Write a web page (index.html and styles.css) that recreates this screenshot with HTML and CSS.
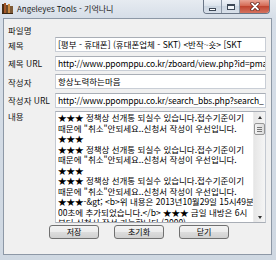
FILE: index.html
```html
<!DOCTYPE html>
<html lang="ko">
<head>
    <meta charset="UTF-8">
    <title>Angeleyes Tools - 기억나니</title>
    <link rel="stylesheet" href="styles.css">
</head>
<body>

<div class="window">
    <div class="titlebar">
        <svg class="app-icon" width="11" height="11" viewBox="0 0 11 11">
            <rect x="0" y="1" width="2" height="10" fill="#4a2e16"/>
            <rect x="2" y="0" width="2" height="11" fill="#a4572a"/>
            <rect x="4" y="2" width="2" height="9" fill="#6b4a2a"/>
            <rect x="6" y="1" width="2" height="10" fill="#c98a44"/>
            <rect x="8" y="3" width="3" height="8" fill="#7d5a36"/>
            <rect x="0" y="10" width="11" height="1" fill="#3a2410"/>
        </svg>
        <span class="title">Angeleyes Tools - 기억나니</span>
        <div class="caption-buttons">
            <div class="cap-btn cap-min"><span class="min-glyph"></span></div>
            <div class="cap-btn cap-max"><span class="max-glyph"></span></div>
            <div class="cap-btn cap-close">
                <svg width="10" height="9" viewBox="0 0 10 9">
                    <path d="M2 1.5 L8 7.5 M8 1.5 L2 7.5" stroke="#5a1a10" stroke-width="3.2" stroke-linecap="round"/>
                    <path d="M2 1.5 L8 7.5 M8 1.5 L2 7.5" stroke="#ffffff" stroke-width="1.8" stroke-linecap="round"/>
                </svg>
            </div>
        </div>
    </div>

    <div class="client">
        <div class="row row-file">
            <span class="label">파일명</span>
        </div>
        <div class="row">
            <span class="label">제목</span>
            <div class="field">[평부 - 휴대폰] (휴대폰업체 - SKT) &lt;반작~숏&gt; [SKT</div>
        </div>
        <div class="row">
            <span class="label">제목 URL</span>
            <div class="field field-url">http://www.ppomppu.co.kr/zboard/view.php?id=pma</div>
        </div>
        <div class="row">
            <span class="label">작성자</span>
            <div class="field">항상노력하는마음</div>
        </div>
        <div class="row">
            <span class="label">작성자 URL</span>
            <div class="field field-url">http://www.ppomppu.co.kr/search_bbs.php?search_</div>
        </div>
        <div class="row row-memo">
            <span class="label label-top">내용</span>
            <div class="memo">
                <div class="memo-text">
                    <div class="line">★★★ 정책상 선개통 되실수 있습니다.접수기준이기</div>
                    <div class="line">때문에 "취소"안되세요..신청서 작성이 우선입니다.</div>
                    <div class="line">★★★</div>
                    <div class="line">★★★ 정책상 선개통 되실수 있습니다.접수기준이기</div>
                    <div class="line">때문에 "취소"안되세요..신청서 작성이 우선입니다.</div>
                    <div class="line">★★★</div>
                    <div class="line">★★★ 정책상 선개통 되실수 있습니다.접수기준이기</div>
                    <div class="line">때문에 "취소"안되세요..신청서 작성이 우선입니다.</div>
                    <div class="line">★★★-&amp;gt; &lt;b&gt;위 내용은 2013년10월29일 15시49분</div>
                    <div class="line">00초에 추가되었습니다.&lt;/b&gt; ★★★ 금일 내방은 6시</div>
                    <div class="line line-cut">부터 신청서 작성 가능합니다 (2000)</div>
                </div>
                <div class="scrollbar">
                    <div class="sb-arrow sb-up"></div>
                    <div class="sb-thumb"><span></span><span></span><span></span></div>
                    <div class="sb-track"></div>
                    <div class="sb-arrow sb-down"></div>
                </div>
            </div>
        </div>
        <div class="buttons">
            <button class="btn">저장</button>
            <button class="btn">초기화</button>
            <button class="btn">닫기</button>
        </div>
    </div>
</div>

</body>
</html>
```

FILE: styles.css
```css
* {
    margin: 0;
    padding: 0;
    box-sizing: border-box;
}
body {
    background: #d3dbe5;
    font-family: "Noto Sans CJK KR", "Noto Sans", sans-serif;
    font-size: 8.5px;
    color: #000;
}
.window {
    width: 276px;
    height: 260px;
    background: linear-gradient(#e6ebf1, #d6dee8 18px, #cfd8e2);
    padding: 0 4px 5px 3px;
    display: flex;
    flex-direction: column;
}

/* title bar */
.titlebar {
    height: 18px;
    display: flex;
    align-items: flex-start;
    margin-left: -1px;
    font-size: 8px;
}
.app-icon {
    margin-top: 3px;
    flex-shrink: 0;
}
.title {
    margin-left: 4px;
    line-height: 18px;
    color: #1b1b1b;
    white-space: nowrap;
}
.caption-buttons {
    margin-left: auto;
    margin-right: 2px;
    display: flex;
    height: 14px;
    border: 1px solid #6a7687;
    border-top: none;
    border-radius: 0 0 4px 4px;
    overflow: hidden;
}
.cap-btn {
    height: 13px;
    display: flex;
    align-items: center;
    justify-content: center;
}
.cap-min, .cap-max {
    width: 18px;
    background: linear-gradient(#eef2f7, #d9e1ea 50%, #cbd5e0 50%, #d8e0ea);
    border-right: 1px solid #8b97a6;
}
.cap-close {
    width: 29px;
    background: linear-gradient(#e9a596, #d2634d 50%, #c04530 50%, #d57360);
}
.min-glyph {
    width: 7px;
    height: 3px;
    margin-top: 5px;
    background: #fff;
    border: 1px solid #3d4856;
}
.max-glyph {
    width: 8px;
    height: 6px;
    border: 1px solid #3d4856;
    border-top-width: 2px;
    background: #f4f7fa;
}

/* client area */
.client {
    flex: 1;
    background: #f0f0f0;
    border: 1px solid #8d98a6;
    padding-top: 4px;
    display: flex;
    flex-direction: column;
}
.row {
    display: flex;
    align-items: center;
    height: 15px;
    margin-bottom: 3.5px;
}
.row-file {
    height: 14px;
    margin-bottom: 0;
}
.label {
    width: 51px;
    padding-left: 4px;
    white-space: nowrap;
    color: #111;
}
.label-top {
    align-self: flex-start;
    line-height: 11px;
}
.field {
    width: 211px;
    height: 15px;
    background: #fff;
    border: 1px solid #c9ced6;
    border-top-color: #a9aeb6;
    padding: 0 2px;
    line-height: 13px;
    white-space: nowrap;
    overflow: hidden;
}
.field-url {
    letter-spacing: -0.12px;
}

/* memo */
.row-memo {
    height: 112px;
    align-items: flex-start;
    margin-bottom: 2px;
}
.memo {
    width: 211px;
    height: 112px;
    background: #fff;
    border: 1px solid #a9aeb6;
    border-left-color: #c4c9d1;
    border-right-color: #c4c9d1;
    display: flex;
}
.memo-text {
    flex: 1;
    padding-left: 2px;
    overflow: hidden;
    line-height: 10.5px;
}
.line {
    white-space: nowrap;
    overflow: hidden;
    height: 10.5px;
}
.line-cut {
    height: 5px;
}
.scrollbar {
    width: 12px;
    display: flex;
    flex-direction: column;
    background: linear-gradient(90deg, #e6e6e6, #f5f5f5);
    border-left: 1px solid #ececec;
}
.sb-arrow {
    height: 10px;
    display: flex;
    align-items: center;
    justify-content: center;
}
.sb-up::after, .sb-down::after {
    content: "";
    border-left: 2.5px solid transparent;
    border-right: 2.5px solid transparent;
}
.sb-up::after {
    border-bottom: 3px solid #333;
}
.sb-down::after {
    border-top: 3px solid #333;
}
.sb-thumb {
    height: 12px;
    margin: 1px 0 0 0;
    border: 1px solid #969696;
    border-radius: 2px;
    background: linear-gradient(90deg, #f3f3f3, #dcdcdc);
    display: flex;
    flex-direction: column;
    align-items: center;
    justify-content: center;
    gap: 1px;
}
.sb-thumb span {
    width: 5px;
    height: 1px;
    background: #777;
}
.sb-track {
    flex: 1;
}

/* buttons */
.buttons {
    display: flex;
    gap: 15px;
    padding-left: 45px;
}
.btn {
    width: 50px;
    height: 14px;
    border: 1px solid #707070;
    border-radius: 3px;
    background: linear-gradient(#f3f3f3, #ebebeb 50%, #dddddd 50%, #d0d0d0);
    font-family: "Noto Sans CJK KR", "Noto Sans", sans-serif;
    font-size: 8px;
    line-height: 12px;
    color: #000;
}
```
